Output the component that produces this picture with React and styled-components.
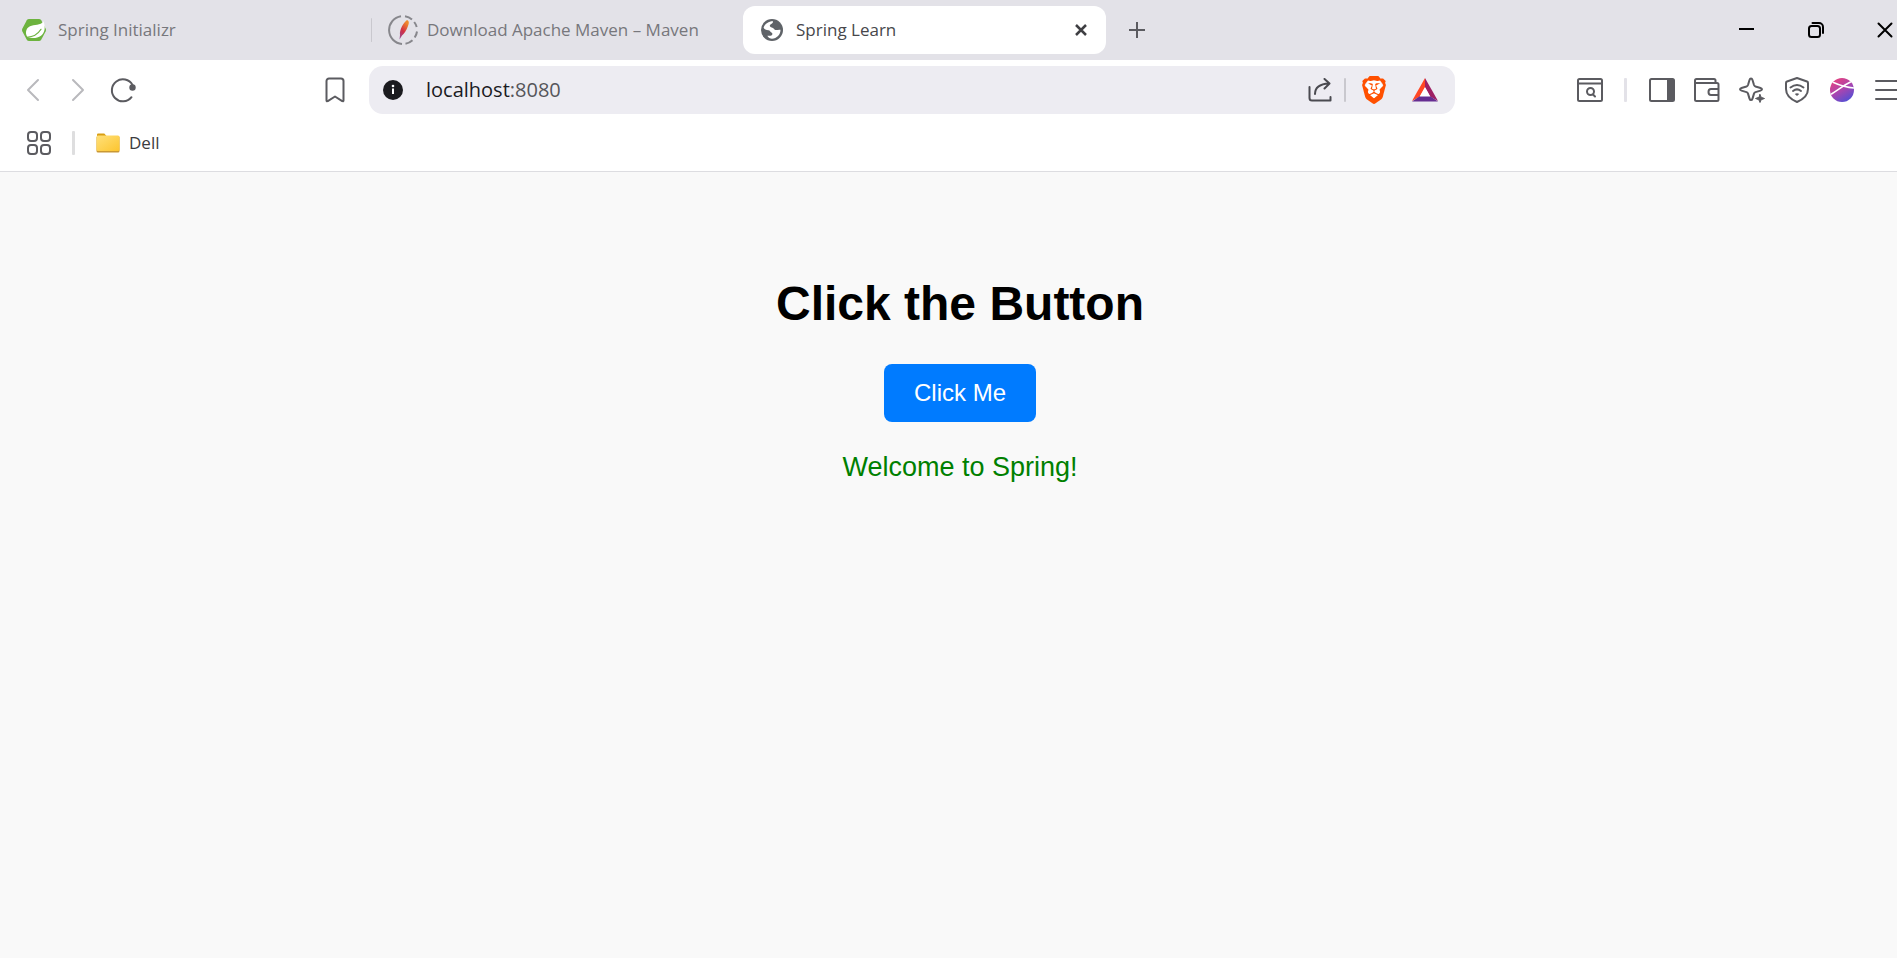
import React, { useState } from "react";
import styled, { createGlobalStyle } from "styled-components";
import { SiBrave } from "react-icons/si";

const GlobalStyle = createGlobalStyle`
  *, *::before, *::after { box-sizing: border-box; }
  html, body { margin: 0; height: 100%; background: #f9f9f9; }
  #root { height: 100%; }
  button, input { font: inherit; color: inherit; }
`;

const uiFont = `"Open Sans", "Noto Sans", sans-serif`;

/* The browser window reaches a little past the right edge of the screen. */
const Screen = styled.div`
  min-height: 100%;
  overflow: hidden;
  display: flex;
`;

const Window = styled.div`
  flex: 0 0 auto;
  width: calc(100% + 23px);
  display: flex;
  flex-direction: column;
`;

const Chrome = styled.header`
  font-family: ${uiFont};
  background: #ffffff;
  border-bottom: 1px solid #dddde1;
`;

const TabStrip = styled.div`
  display: flex;
  align-items: center;
  height: 60px;
  background: #e3e2e8;
`;

const TabList = styled.nav`
  display: flex;
  align-items: center;
`;

const Tab = styled.button`
  display: flex;
  align-items: center;
  gap: ${(p) => p.$gap || 12}px;
  width: 371px;
  height: 48px;
  padding: 0 0 0 ${(p) => p.$inset || 17}px;
  border: 0;
  background: transparent;
  color: #77777c;
  font-size: 17px;
  line-height: 24px;
  text-align: left;
  white-space: nowrap;
`;

const ActiveTab = styled.div`
  display: flex;
  align-items: center;
  width: 363px;
  height: 48px;
  padding-right: 10px;
  border-radius: 12px;
  background: #ffffff;
`;

const ActiveTabTitle = styled(Tab)`
  flex: 1;
  color: #47474b;
`;

const Divider = styled.span`
  flex: none;
  width: ${(p) => p.$thick || 1}px;
  height: 24px;
  margin: 0 ${(p) => p.$space || 0}px;
  border-radius: 1px;
  background: ${(p) => p.$color || "#c9c8ce"};
`;

const IconButton = styled.button`
  display: flex;
  flex: none;
  align-items: center;
  justify-content: center;
  width: ${(p) => p.$width || 45}px;
  height: 40px;
  padding: 0;
  border: 0;
  background: transparent;
  color: ${(p) => p.$color || "#5b5b60"};
  cursor: pointer;

  svg { display: block; flex: none; }
`;

const NewTabButton = styled(IconButton)`
  margin-left: 8px;
`;

const WindowControls = styled.div`
  display: flex;
  margin-left: auto;
  padding-right: 1px;
`;

const Toolbar = styled.div`
  display: flex;
  align-items: center;
  height: 60px;
`;

const NavGroup = styled.div`
  display: flex;
  flex: none;
  align-items: center;
  width: 369px;
  padding: 0 12px 0 10px;
`;

const BookmarkButton = styled(IconButton)`
  margin-left: auto;
`;

const ActionGroup = styled.div`
  display: flex;
  flex: none;
  align-items: center;
  justify-content: flex-end;
  width: 465px;
  padding-right: 11px;
`;

const AddressBar = styled.form`
  display: flex;
  flex: 1;
  align-items: center;
  min-width: 0;
  height: 48px;
  padding: 0 7px 0 1px;
  border-radius: 14px;
  background: #edecf2;
`;

const Address = styled.a`
  flex: 1;
  padding-left: 11px;
  color: #55555a;
  font-size: 20px;
  line-height: 28px;
  text-decoration: none;
`;

const Host = styled.span`
  color: #1b1b1f;
`;

const BookmarksBar = styled.div`
  display: flex;
  align-items: center;
  height: 51px;
  padding: 0 16px 5px;
`;

const Folder = styled.button`
  display: flex;
  align-items: center;
  gap: 9px;
  height: 36px;
  padding: 0 10px;
  border: 0;
  background: transparent;
  color: #3c3c40;
  font-size: 17px;
  line-height: 24px;
`;

const Page = styled.main`
  flex: 1;
  padding-top: 72px;
  background: #f9f9f9;
  font-family: "Liberation Sans", Arial, sans-serif;
  text-align: center;
`;

const Heading = styled.h1`
  margin: 32px 0;
  color: #000000;
  font-size: 48px;
  line-height: 56px;
`;

const ClickButton = styled.button`
  padding: 15px 30px;
  border: 0;
  border-radius: 8px;
  background: #007bff;
  cursor: pointer;

  && { color: #ffffff; font-size: 24px; line-height: 28px; }
`;

const Message = styled.p`
  margin: 30px 0 0;
  color: #008000;
  font-size: 27px;
  line-height: 30px;
`;

function Svg({ w = 26, h = w, sw = 2, children, ...rest }) {
  return (
    <svg width={w} height={h} viewBox={`0 0 ${w} ${h}`} fill="none" stroke="currentColor" strokeWidth={sw} strokeLinecap="round" strokeLinejoin="round" aria-hidden="true" {...rest}>
      {children}
    </svg>
  );
}

const SpringIcon = () => (
  <Svg w={24} h={22} stroke="none">
    <path d="M7 0h10c1 0 1.700.4 2.200 1.200l4.400 8.300c.5 1 .5 2 0 3l-4.400 8.300c-.5.800-1.200 1.200-2.200 1.200H7c-1 0-1.700-.4-2.200-1.200L.4 12.500c-.5-1-.5-2 0-3l4.400-8.300C5.300.4 6 0 7 0z" fill="#6db33f" />
    <path d="M21.500 2.200C23.700 8 23 13.500 19 16.700c-3.500 2.600-9 2.700-13.500 1.600C3 14.500 3.500 9.500 8 7.300c4-2.100 10.700-.6 13.500-5.100z" fill="#fff" />
    <path d="M5 18.300c5-.2 10.500-2.500 14-8" stroke="#6db33f" strokeWidth="1.200" />
  </Svg>
);

const MavenIcon = () => (
  <Svg w={30} sw={2}>
    <defs>
      <linearGradient id="feather" x1="0" y1="1" x2="0.500" y2="0">
        <stop offset="0" stopColor="#8b4a9c" />
        <stop offset="0.500" stopColor="#d22f45" />
        <stop offset="1" stopColor="#f08a2c" />
      </linearGradient>
    </defs>
    <path d="M13 1.200A14 14 0 0 0 14 29M17 1.200A14 14 0 0 1 24 4.500M26.200 7A14 14 0 0 1 28.700 12M29 16.500A14 14 0 0 1 26.700 22.500M24.500 25.300A14 14 0 0 1 17.500 28.800" stroke="#87878c" strokeLinecap="butt" />
    <path d="M19 5c2.500 1 2 3.500 1 6-1.500 4-3.500 7.500-6 9.500l-2.500 4 .5-4.500c-.8-5 3.500-12.500 7-15z" fill="url(#feather)" stroke="none" />
  </Svg>
);

const GlobeIcon = () => (
  <Svg w={22} stroke="none">
    <circle cx="11" cy="11" r="11" fill="#5f6368" />
    <path d="M2.600 8.500C4.300 4.500 7.800 2.200 12 2.300c.6 1.700-1.600 2.500-2.800 3.400-1 1-.2 2.400 1.500 2.800 2.200.4 2.300 2 3.600 2.500 1.500.4 3-.6 5.200-.2.100 4.900-3.800 8.800-8.500 8.900-1.800 0-3.800-1.200-4.700-3h3.200c2.300-.3 2.400-2.300 1-3.200-1.200-.8-1.500-2-3-2.300-2.400-.4-4.300-.7-4.900-2.700z" fill="#fff" />
  </Svg>
);

const FolderIcon = () => (
  <Svg w={24} h={20} stroke="none">
    <defs>
      <linearGradient id="folder" x1="0" y1="0" x2="1" y2="1">
        <stop offset="0" stopColor="#ffe07a" />
        <stop offset="1" stopColor="#fcc52f" />
      </linearGradient>
    </defs>
    <path d="M1 2C1 .9 1.500.500 2.500.500h5.800L10.500 3H20v4H1z" fill="#d99e12" />
    <rect x="0.500" y="3" width="23" height="16.500" rx="1.500" fill="#c99834" />
    <rect x="0.500" y="2.500" width="23" height="15.500" rx="1.500" fill="url(#folder)" />
  </Svg>
);

const BatIcon = () => (
  <Svg w={26} h={24} stroke="none">
    <path d="M13 0L0 23l8-4.500 5-9z" fill="#ff4724" />
    <path d="M13 0l13 23-8-4.500-5-9z" fill="#9e1f63" />
    <path d="M0 23.500h26L18 18H8z" fill="#662d91" />
    <path d="M13 9l5.300 9.500H7.700z" fill="#fff" />
  </Svg>
);

const AvatarIcon = () => (
  <Svg w={24} stroke="none">
    <defs>
      <linearGradient id="avatar" x1="0.200" y1="0" x2="0.800" y2="1">
        <stop offset="0" stopColor="#e9427c" />
        <stop offset="0.500" stopColor="#a845b0" />
        <stop offset="1" stopColor="#4a50d8" />
      </linearGradient>
    </defs>
    <circle cx="12" cy="12" r="12" fill="url(#avatar)" />
    <path d="M3.500 4.500C9 7 16 9.500 24 10M1.500 16C8 12 14 7 20.500 4" stroke="#fff" strokeWidth="1.500" />
  </Svg>
);

const LionIcon = () => (
  <svg width="28" height="28" viewBox="0 0 28 28" aria-hidden="true">
    <path d="M8 5h12l3 6-3 9-6 5-6-5-3-9z" fill="#fff" />
    <SiBrave x="0" y="0" size={28} color="#ff5000" />
  </svg>
);

export default function App() {
  const [message, setMessage] = useState("Welcome to Spring!");

  return (
    <Screen>
      <GlobalStyle />
      <Window>
        <Chrome>
          <TabStrip>
            <TabList aria-label="Tabs">
              <Tab $inset={22} $gap={12}><SpringIcon />Spring Initializr</Tab>
              <Divider />
              <Tab $inset={16} $gap={9}><MavenIcon />Download Apache Maven – Maven</Tab>
              <ActiveTab>
                <ActiveTabTitle $inset={18} $gap={13}><GlobeIcon />Spring Learn</ActiveTabTitle>
                <IconButton $width={30} $color="#3f3f43" aria-label="Close tab">
                  <Svg w={12} sw={2} strokeLinecap="butt"><path d="M1 1l10 10M11 1L1 11" strokeWidth="2.500" /></Svg>
                </IconButton>
              </ActiveTab>
            </TabList>
            <NewTabButton aria-label="New tab">
              <Svg w={16} sw={2} strokeLinecap="butt"><path d="M8 0v16M0 8h16" /></Svg>
            </NewTabButton>
            <WindowControls>
              <IconButton $width={69} $color="#000" aria-label="Minimise">
                <Svg w={16} strokeLinecap="butt"><path d="M0 7h15" /></Svg>
              </IconButton>
              <IconButton $width={69} $color="#000" aria-label="Restore">
                <Svg w={16}>
                  <rect x="1" y="4" width="11" height="11" rx="2.500" />
                  <path d="M4.500 1H11a4 4 0 0 1 4 4v6" />
                </Svg>
              </IconButton>
              <IconButton $width={69} $color="#000" aria-label="Close window">
                <Svg w={16}><path d="M1.500 1.500l13 13M14.500 1.500l-13 13" /></Svg>
              </IconButton>
            </WindowControls>
          </TabStrip>

          <Toolbar>
            <NavGroup>
              <IconButton $color="#b9b9bd" aria-label="Back">
                <Svg w={14} h={24}><path d="M12 2L2 12l10 10" /></Svg>
              </IconButton>
              <IconButton $color="#b9b9bd" aria-label="Forward">
                <Svg w={14} h={24}><path d="M2 2l10 10L2 22" /></Svg>
              </IconButton>
              <IconButton aria-label="Reload">
                <Svg w={26}>
                  <path d="M21.500 20.200A11 11 0 1 1 22.500 8" />
                  <circle cx="22.500" cy="10.500" r="3.200" fill="currentColor" stroke="none" />
                </Svg>
              </IconButton>
              <BookmarkButton aria-label="Bookmark this page">
                <Svg w={20} h={26}><path d="M4 1.500h12a2.500 2.500 0 0 1 2.500 2.500v19.500c0 .8-.7 1.100-1.300.6L10 19.500l-7.200 4.600c-.6.5-1.300.2-1.300-.6V4A2.500 2.500 0 0 1 4 1.500z" /></Svg>
              </BookmarkButton>
            </NavGroup>

            <AddressBar onSubmit={(e) => e.preventDefault()}>
              <IconButton type="button" aria-label="View site information">
                <Svg w={20} stroke="none">
                  <circle cx="10" cy="10" r="10" fill="#1b1b1f" />
                  <circle cx="10" cy="6" r="1.300" fill="#fff" />
                  <path d="M9 8.500h2V14H9z" fill="#fff" />
                </Svg>
              </IconButton>
              <Address href="#"><Host>localhost</Host>:8080</Address>
              <IconButton type="button" $color="#4a4a50" $width={48} aria-label="Share">
                <Svg w={24}>
                  <path d="M1.500 9v11a2.500 2.500 0 0 0 2.500 2.500h18.500V19M7 16c0-6 4-10 14-10.500M16.500 1l5 4.500-5 5" />
                </Svg>
              </IconButton>
              <Divider $thick={2} />
              <IconButton type="button" $width={56} aria-label="Brave Shields"><LionIcon /></IconButton>
              <IconButton type="button" $width={46} aria-label="Brave Rewards"><BatIcon /></IconButton>
            </AddressBar>

            <ActionGroup>
              <IconButton aria-label="Search tabs">
                <Svg w={26} h={24}>
                  <rect x="1" y="1" width="24" height="22" rx="1.500" />
                  <path d="M1 5.500h24M16 16.500l2 2" />
                  <circle cx="13.500" cy="13.500" r="3.500" />
                </Svg>
              </IconButton>
              <Divider $thick={3} $space={12} $color="#e3e2e8" />
              <IconButton aria-label="Sidebar">
                <Svg w={26} h={24}>
                  <rect x="1" y="1" width="24" height="22" rx="1.500" />
                  <path d="M18 1h6.500v22H18z" fill="currentColor" stroke="none" />
                </Svg>
              </IconButton>
              <IconButton aria-label="Wallet">
                <Svg w={26} h={24}>
                  <path d="M1 5v16.500c0 1 .5 1.500 1.500 1.500H23c1 0 1.500-.5 1.500-1.500V6.500c0-1-.5-1.500-1.500-1.500H1.500M1 5V2.500C1 1.500 1.500 1 2.500 1H20c1 0 1.500.5 1.500 1.500V5M24.500 11H17c-1.500 0-2.500 1-2.500 3s1 3 2.500 3h7.500" />
                </Svg>
              </IconButton>
              <IconButton aria-label="Leo AI">
                <Svg w={26} h={26}>
                  <path d="M12 1.500c.7 0 1.200.5 1.500 1.500l1.500 5c.3.800.7 1.200 1.500 1.500l5 1.500c2 .6 2 2 0 2.600l-5 1.500c-.8.3-1.200.7-1.500 1.500l-1.500 5c-.6 2-2.400 2-3 0L9 16.600c-.3-.8-.7-1.200-1.500-1.500l-5-1.500c-2-.6-2-2 0-2.600l5-1.500c.8-.3 1.200-.7 1.500-1.500l1.500-5c.3-1 .8-1.500 1.500-1.500z" />
                  <path d="M21 17.500l1.200 2.800 3.300 1.200-3.300 1.200L21 25.500l-1.200-2.800-3.300-1.200 3.300-1.200z" fill="currentColor" strokeWidth="1" />
                </Svg>
              </IconButton>
              <IconButton aria-label="VPN">
                <Svg w={24} h={26}>
                  <path d="M12 1l10 3.500c.6.2 1 .7 1 1.400V12c0 6-4 10-11 13C5 22 1 18 1 12V5.900c0-.7.4-1.200 1-1.400z" />
                  <path d="M5.500 10.500c4-3 9-3 13 0M8 14c2.500-2 5.500-2 8 0" />
                  <path d="M9.800 17c1.400-1 3-1 4.400 0L12 19z" fill="currentColor" stroke="none" />
                </Svg>
              </IconButton>
              <IconButton aria-label="Profile"><AvatarIcon /></IconButton>
              <IconButton aria-label="Menu">
                <Svg w={24} h={20}><path d="M1 1h22M1 10h22M1 19h22" /></Svg>
              </IconButton>
            </ActionGroup>
          </Toolbar>

          <BookmarksBar>
            <IconButton aria-label="Apps">
              <Svg w={26}>
                <rect x="2" y="2" width="9" height="9" rx="3" />
                <rect x="15" y="2" width="9" height="9" rx="3" />
                <rect x="2" y="15" width="9" height="9" rx="3" />
                <rect x="15" y="15" width="9" height="9" rx="3" />
              </Svg>
            </IconButton>
            <Divider $thick={3} $space={11} $color="#dededf" />
            <Folder><FolderIcon />Dell</Folder>
          </BookmarksBar>
        </Chrome>

        <Page>
          <Heading>Click the Button</Heading>
          <ClickButton onClick={() => setMessage("Welcome to Spring!")}>Click Me</ClickButton>
          <Message role="status">{message}</Message>
        </Page>
      </Window>
    </Screen>
  );
}
